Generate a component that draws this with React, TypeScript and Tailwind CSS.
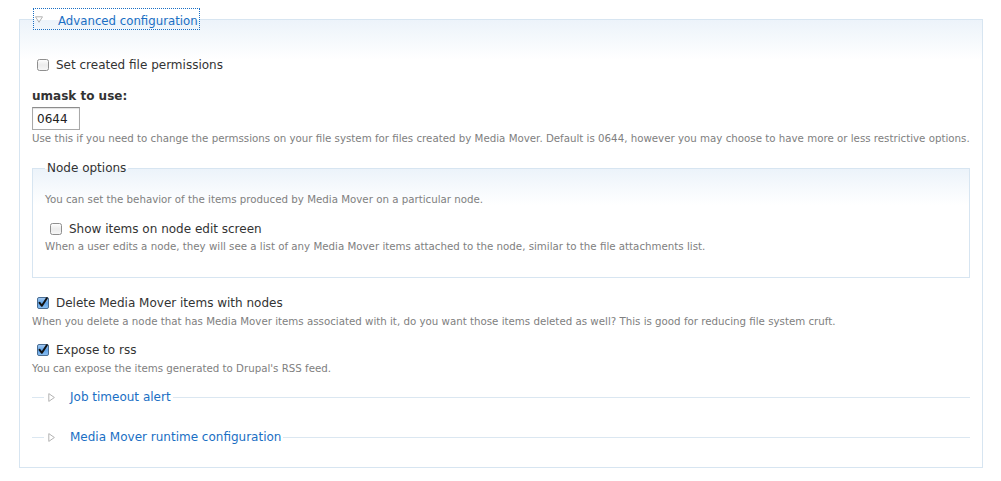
import React from "react";

function Box({ checked }: { checked?: boolean }) {
  if (checked) {
    return (
      <svg width="12" height="12" viewBox="0 0 12 12" className="shrink-0">
        <defs>
          <linearGradient id="cbOn" x1="0" y1="0" x2="0" y2="1">
            <stop offset="0" stopColor="#a9cdf3" />
            <stop offset="0.5" stopColor="#5fa2e6" />
            <stop offset="1" stopColor="#8cc0f2" />
          </linearGradient>
        </defs>
        <rect x="0.5" y="0.5" width="11" height="11" rx="1.5" fill="url(#cbOn)" stroke="#4a6d92" />
        <path d="M2.6 5.8 L4.9 8.8 L9.8 1.2" fill="none" stroke="#111" strokeWidth="2" strokeLinecap="round" strokeLinejoin="round" />
      </svg>
    );
  }
  return (
    <svg width="12" height="12" viewBox="0 0 12 12" className="shrink-0">
      <defs>
        <linearGradient id="cbOff" x1="0" y1="0" x2="0" y2="1">
          <stop offset="0" stopColor="#ffffff" />
          <stop offset="0.5" stopColor="#ececec" />
          <stop offset="1" stopColor="#f7f7f7" />
        </linearGradient>
      </defs>
      <rect x="0.5" y="0.5" width="11" height="11" rx="2" fill="url(#cbOff)" stroke="#8f8f8f" />
    </svg>
  );
}

function Tri({ open }: { open?: boolean }) {
  return open ? (
    <svg width="8" height="7" viewBox="0 0 8 7" className="shrink-0">
      <path d="M0.5 0.8 H7.5 L4 6.3 Z" fill="none" stroke="#b3b3b3" strokeWidth="1" strokeLinejoin="round" />
    </svg>
  ) : (
    <svg width="7" height="9" viewBox="0 0 7 9" className="shrink-0">
      <path d="M0.8 0.6 V8.4 L6.4 4.5 Z" fill="none" stroke="#b3b3b3" strokeWidth="1" strokeLinejoin="round" />
    </svg>
  );
}

function Check({ label, checked, className = "" }: { label: string; checked?: boolean; className?: string }) {
  return (
    <div className={`flex h-[16px] items-center gap-[7px] pl-[5px] text-[12px] leading-[16px] text-[#333] ${className}`}>
      <Box checked={checked} />
      <span>{label}</span>
    </div>
  );
}

function Desc({ children, className = "" }: { children: React.ReactNode; className?: string }) {
  return <div className={`text-[10.25px] leading-[14px] text-[#808080] ${className}`}>{children}</div>;
}

function Collapsed({ title }: { title: string }) {
  return (
    <fieldset className="border-t border-[#dbe7f1] pl-[12px]">
      <legend className="flex h-[16px] items-center pl-[4px] pr-[2px] text-[12px] leading-[16px] text-[#1a6fc4]">
        <Tri />
        <span className="ml-[15px]">{title}</span>
      </legend>
    </fieldset>
  );
}

export default function App() {
  return (
    <div className="w-[1001px] h-[481px] bg-white pt-[8px] font-['DejaVu_Sans',Verdana,sans-serif]">
      <fieldset className="ml-[19px] mr-[18px] border border-[#d7e5f1] bg-[linear-gradient(#ecf3fa,#ffffff_40px)] px-[12px] pb-[22px]">
        <legend className="ml-[1px] flex h-[22px] items-center pl-[2px] pr-[2px] outline outline-1 outline-dotted outline-[#1a6fc4] -outline-offset-1 text-[11.75px] text-[#1a6fc4]">
          <Tri open />
          <span className="ml-[15px] pt-[4px] leading-[16px]">Advanced configuration</span>
        </legend>

        <Check label="Set created file permissions" className="mt-[27px]" />

        <div className="mt-[15px] text-[12px] leading-[16px] font-bold text-[#333]">umask to use:</div>
        <div className="mt-[3px] flex h-[23px] w-[48px] items-center border border-[#a9a9a9] border-t-[#8c8c8c] pl-[4px] text-[12px] text-[#222] shadow-[inset_0_1px_1px_rgba(0,0,0,0.12)]">
          0644
        </div>
        <Desc className="mt-[1px]">
          Use this if you need to change the permssions on your file system for files created by Media Mover. Default is 0644, however you may choose to have more or less restrictive options.
        </Desc>

        <fieldset className="mt-[15px] border border-[#d7e5f1] bg-[linear-gradient(#ecf3fa,#ffffff_36px)] px-[12px] pb-[24px]">
          <legend className="px-[2px] text-[12px] leading-[16px] text-[#333]">Node options</legend>
          <Desc className="mt-[16px]">You can set the behavior of the items produced by Media Mover on a particular node.</Desc>
          <Check label="Show items on node edit screen" className="mt-[15px]" />
          <Desc className="mt-[2px]">
            When a user edits a node, they will see a list of any Media Mover items attached to the node, similar to the file attachments list.
          </Desc>
        </fieldset>

        <Check label="Delete Media Mover items with nodes" checked className="mt-[17px]" />
        <Desc className="mt-[3px]">
          When you delete a node that has Media Mover items associated with it, do you want those items deleted as well? This is good for reducing file system cruft.
        </Desc>

        <Check label="Expose to rss" checked className="mt-[14px]" />
        <Desc className="mt-[3px]">You can expose the items generated to Drupal's RSS feed.</Desc>

        <div className="mt-[14px]">
          <Collapsed title="Job timeout alert" />
        </div>
        <div className="mt-[24px]">
          <Collapsed title="Media Mover runtime configuration" />
        </div>
      </fieldset>
    </div>
  );
}
